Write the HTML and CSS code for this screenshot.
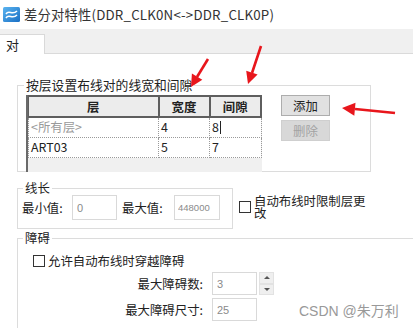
FILE: index.html
```html
<!DOCTYPE html>
<html lang="zh-CN">
  <head>
    <meta charset="UTF-8" />
    <meta name="viewport" content="width=device-width, initial-scale=1.0" />
    <title>差分对特性</title>
    <link rel="stylesheet" href="styles.css">
  </head>
  <body>
    <div class="window">
      <div class="titlebar">
        <svg class="app-icon" width="17" height="15" viewBox="0 0 17 15">
          <defs>
            <linearGradient id="ig" x1="0" y1="0" x2="1" y2="1">
              <stop offset="0" stop-color="#5ab4f0" />
              <stop offset="1" stop-color="#1a6fc4" />
            </linearGradient>
          </defs>
          <rect x="0" y="0" width="17" height="15" rx="1.5" fill="url(#ig)" />
          <path d="M3 7 C6 2, 9 9, 14 4" stroke="#fff" stroke-width="1.6" fill="none" />
          <path d="M3 11 C6 6, 9 13, 14 8" stroke="#fff" stroke-width="1.6" fill="none" />
        </svg>
        <span class="title">差分对特性(DDR_CLK0N&lt;-&gt;DDR_CLK0P)</span>
      </div>

      <div class="tabstrip">
        <div class="tab">对</div>
      </div>

      <div class="page">
        <fieldset class="group group-layers">
          <legend>按层设置布线对的线宽和间隙</legend>
          <div class="layers-row">
            <div class="grid-box">
              <table class="grid">
                <thead>
                  <tr>
                    <th class="col-layer">层</th>
                    <th class="col-width">宽度</th>
                    <th class="col-gap">间隙</th>
                  </tr>
                </thead>
                <tbody>
                  <tr>
                    <td class="muted">&lt;所有层&gt;</td>
                    <td>4</td>
                    <td>8<span class="caret"></span></td>
                  </tr>
                  <tr>
                    <td>ART03</td>
                    <td>5</td>
                    <td>7</td>
                  </tr>
                </tbody>
              </table>
            </div>
            <div class="buttons">
              <button class="btn">添加</button>
              <button class="btn" disabled>删除</button>
            </div>
          </div>
        </fieldset>

        <div class="length-row">
          <fieldset class="group group-length">
            <legend>线长</legend>
            <div class="field-row">
              <label class="lbl">最小值:</label>
              <input class="num" type="text" value="0" disabled />
              <label class="lbl lbl-max">最大值:</label>
              <input class="num num-small" type="text" value="448000" disabled />
            </div>
          </fieldset>
          <label class="check check-wrap">
            <span class="box"></span>
            <span class="check-text">自动布线时限制层更改</span>
          </label>
        </div>

        <fieldset class="group group-obstacle">
          <legend>障碍</legend>
          <label class="check check-pass">
            <span class="box"></span>
            <span>允许自动布线时穿越障碍</span>
          </label>
          <div class="limit-row">
            <span class="limit-label">最大障碍数:</span>
            <input class="num" type="text" value="3" disabled />
            <div class="spinner">
              <span class="spin-up"></span>
              <span class="spin-down"></span>
            </div>
          </div>
          <div class="limit-row">
            <span class="limit-label">最大障碍尺寸:</span>
            <input class="num" type="text" value="25" disabled />
            <span class="watermark">CSDN @朱万利</span>
          </div>
        </fieldset>
      </div>

      <svg class="arrows" width="413" height="328" viewBox="0 0 413 328">
        <g stroke="#e8161c" stroke-width="2.6" fill="#e8161c">
          <line x1="208" y1="59" x2="197" y2="77" />
          <polygon points="191,87 202.3,79.8 191.9,73.6" stroke="none" />
          <line x1="261" y1="46" x2="252" y2="73" />
          <polygon points="248,84 257.6,74.6 246.2,70.8" stroke="none" />
          <line x1="395" y1="113" x2="355" y2="109" />
          <polygon points="342,108 355.5,102.7 354.3,115.7" stroke="none" />
        </g>
      </svg>
    </div>
  </body>
</html>
```

FILE: styles.css
```css
body {
  margin: 0;
  font-family: "Noto Sans CJK SC", "Noto Sans", sans-serif;
  font-size: 12.4px;
  color: #222;
  background-color: #fff;
  overflow: hidden;
}

.window {
  position: relative;
  width: 413px;
  height: 328px;
  overflow: hidden;
}

.titlebar {
  display: flex;
  align-items: center;
  gap: 4px;
  height: 29px;
  padding-left: 3px;
  box-sizing: border-box;
}

.title {
  font-size: 13.3px;
  color: #333;
  letter-spacing: 0.2px;
}

.tabstrip {
  height: 24px;
  background-color: #f0f0f0;
  border-bottom: 1px solid #dadada;
  display: flex;
  align-items: flex-end;
}

.tab {
  width: 45px;
  height: 20px;
  box-sizing: border-box;
  background-color: #fff;
  border: 1px solid #d9d9d9;
  border-bottom: none;
  border-left: none;
  padding-left: 6px;
  line-height: 19px;
  font-size: 13px;
  margin-bottom: -1px;
}

.page {
  padding-left: 17px;
}

.group {
  margin: 0;
  border: 1px solid #dcdcdc;
  padding: 0;
  min-width: 0;
}

.group legend {
  margin-left: 5px;
  padding: 0 2px;
  line-height: 14px;
}

.group-layers {
  margin-top: 24px;
  width: 354px;
  box-sizing: border-box;
  padding-top: 3px;
}

.group-layers legend {
  font-size: 12.8px;
  margin-left: 6px;
}

.layers-row {
  display: flex;
  align-items: flex-start;
  gap: 19px;
  padding-left: 8px;
}

.grid-box {
  width: 236px;
  height: 77px;
  box-sizing: border-box;
  background-color: #f0f0f0;
  border-left: 2px solid #6a6a6a;
  margin-bottom: -1px;
}

.grid {
  width: 100%;
  border-collapse: collapse;
}

.grid th {
  height: 21px;
  padding: 0;
  background-color: #ececec;
  border: 1px solid #5e5e5e;
  border-width: 2px 2px 2px 1px;
  font-weight: bold;
  box-sizing: border-box;
}

.col-layer {
  width: 130px;
}

.col-width {
  width: 51px;
}

.grid td {
  height: 19px;
  padding: 0 0 0 2px;
  background-color: #fff;
  border: 1px dotted #9a9a9a;
  line-height: 17px;
}

.grid td.muted {
  color: #9a9a9a;
}

.caret {
  display: inline-block;
  width: 1px;
  height: 13px;
  background-color: #222;
  vertical-align: -2px;
  margin-left: 1px;
}

.buttons {
  display: flex;
  flex-direction: column;
  gap: 4px;
}

.btn {
  width: 49px;
  height: 21px;
  padding: 0;
  font-family: inherit;
  font-size: 12.4px;
  color: #222;
  background-color: #e1e1e1;
  border: 1px solid #adadad;
}

.btn:disabled {
  color: #a3a3a3;
  background-color: #d8d8d8;
  border-color: #cfcfcf;
}

.length-row {
  display: flex;
  align-items: center;
  gap: 6px;
  margin-top: 9px;
}

.group-length {
  width: 216px;
  box-sizing: border-box;
  padding-bottom: 8px;
}

.field-row {
  display: flex;
  align-items: center;
  padding-left: 4px;
}

.lbl {
  width: 52px;
}

.lbl-max {
  margin-left: 5px;
}

.num {
  width: 45px;
  height: 25px;
  box-sizing: border-box;
  border: 1px solid #d9d9d9;
  background-color: #fff;
  padding: 0 0 0 4px;
  font-family: "Liberation Sans", Arial, sans-serif;
  font-size: 11px;
  color: #8a8a8a;
}

.field-row .num:first-of-type {
  margin-left: -2px;
}

.num-small {
  width: 46px;
  font-size: 9.5px;
  padding-left: 3px;
}

.check {
  display: flex;
  align-items: center;
  gap: 3px;
}

.box {
  width: 12px;
  height: 12px;
  box-sizing: border-box;
  border: 1px solid #333;
  background-color: #fff;
  flex: none;
}

.check-text {
  width: 116px;
  line-height: 12px;
}

.check-wrap {
  margin-top: 4px;
}

.group-obstacle {
  margin-top: 2px;
  width: 420px;
  height: 120px;
  box-sizing: border-box;
  padding-top: 7px;
}

.check-pass {
  padding-left: 15px;
}

.limit-row {
  display: flex;
  align-items: center;
  margin-top: 2px;
}

.limit-row + .limit-row {
  margin-top: 3px;
}

.limit-label {
  width: 185px;
  text-align: right;
  margin-right: 9px;
}

.limit-row .num {
  height: 23px;
}

.spinner {
  display: flex;
  flex-direction: column;
  width: 15px;
  height: 23px;
  margin-left: 2px;
}

.spin-up,
.spin-down {
  flex: 1;
  background-color: #efefef;
  border: 1px solid #e2e2e2;
  position: relative;
}

.spin-up::after,
.spin-down::after {
  content: "";
  position: absolute;
  left: 4px;
  top: 3px;
  border-left: 3px solid transparent;
  border-right: 3px solid transparent;
}

.spin-up::after {
  border-bottom: 3px solid #555;
}

.spin-down::after {
  border-top: 3px solid #555;
}

.watermark {
  margin-left: 42px;
  font-size: 14px;
  color: #999;
  font-family: "Liberation Sans", "Noto Sans CJK SC", sans-serif;
}

.arrows {
  position: absolute;
  left: 0;
  top: 0;
  pointer-events: none;
}
```
